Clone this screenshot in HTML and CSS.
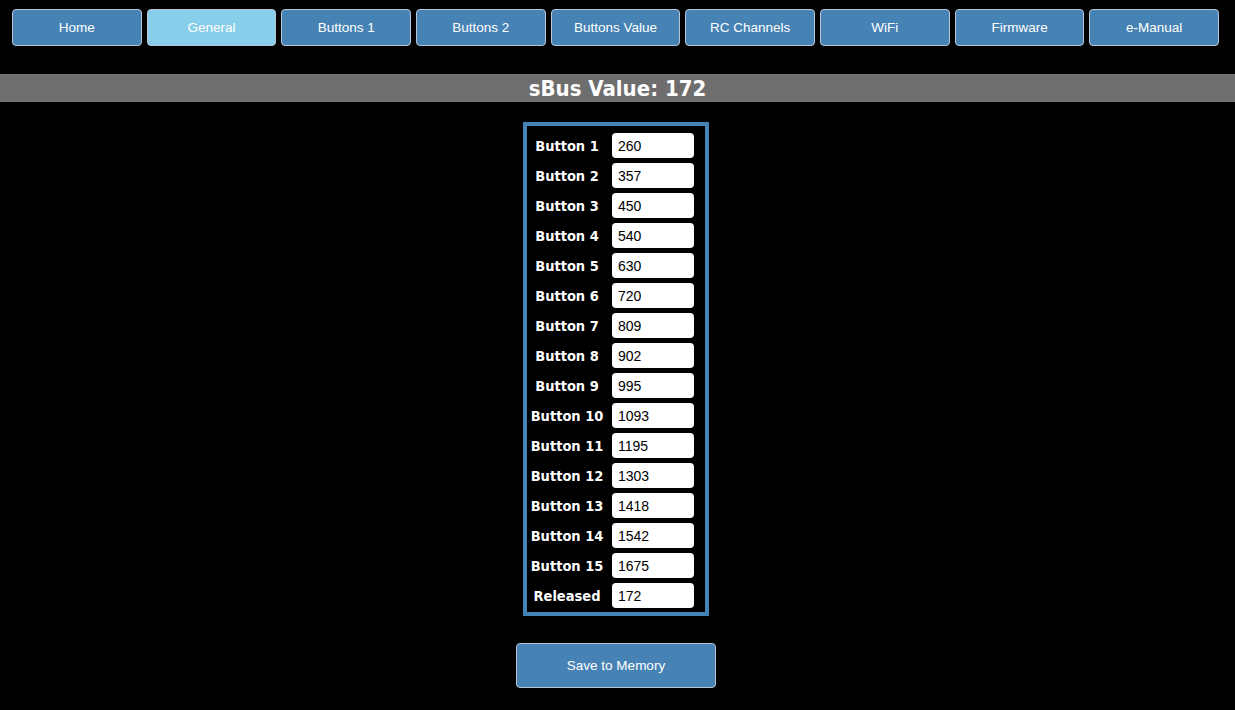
FILE: index.html
```html
<!DOCTYPE html>
<html>
<head>
<meta charset="utf-8">
<link rel="stylesheet" href="styles.css">
</head>
<body>
<nav class="nav">
  <button class="nav-btn">Home</button>
  <button class="nav-btn active">General</button>
  <button class="nav-btn">Buttons 1</button>
  <button class="nav-btn">Buttons 2</button>
  <button class="nav-btn">Buttons Value</button>
  <button class="nav-btn">RC Channels</button>
  <button class="nav-btn">WiFi</button>
  <button class="nav-btn">Firmware</button>
  <button class="nav-btn">e-Manual</button>
</nav>
<h1 class="title">sBus Value: 172</h1>
<main class="content">
  <div class="box">
    <label class="lbl">Button 1</label><input class="val" value="260">
    <label class="lbl">Button 2</label><input class="val" value="357">
    <label class="lbl">Button 3</label><input class="val" value="450">
    <label class="lbl">Button 4</label><input class="val" value="540">
    <label class="lbl">Button 5</label><input class="val" value="630">
    <label class="lbl">Button 6</label><input class="val" value="720">
    <label class="lbl">Button 7</label><input class="val" value="809">
    <label class="lbl">Button 8</label><input class="val" value="902">
    <label class="lbl">Button 9</label><input class="val" value="995">
    <label class="lbl">Button 10</label><input class="val" value="1093">
    <label class="lbl">Button 11</label><input class="val" value="1195">
    <label class="lbl">Button 12</label><input class="val" value="1303">
    <label class="lbl">Button 13</label><input class="val" value="1418">
    <label class="lbl">Button 14</label><input class="val" value="1542">
    <label class="lbl">Button 15</label><input class="val" value="1675">
    <label class="lbl">Released</label><input class="val" value="172">
  </div>
  <button class="save">Save to Memory</button>
</main>
</body>
</html>
```
FILE: styles.css
```css
html, body {
  margin: 0;
  padding: 0;
  background: #000;
  height: 100%;
}
body {
  font-family: "Liberation Sans", Arial, sans-serif;
  color: #fff;
}
.nav {
  display: flex;
  gap: 5px;
  padding: 9px 16px 0 12px;
}
.nav-btn {
  flex: 1 1 0;
  height: 37px;
  box-sizing: border-box;
  background: #4682b4;
  color: #fff;
  border: 1px solid #b8c8d8;
  border-radius: 4px;
  font-family: "Liberation Sans", Arial, sans-serif;
  font-size: 13.5px;
  padding: 0;
}
.nav-btn.active {
  background: #87ceeb;
}
.title {
  margin: 28px 0 0 0;
  height: 28px;
  background: #6e6e6e;
  font-family: "DejaVu Sans Condensed", "DejaVu Sans", sans-serif;
  font-stretch: condensed;
  font-weight: bold;
  font-size: 22px;
  line-height: 29px;
  text-align: center;
  color: #fff;
}
.content {
  display: flex;
  flex-direction: column;
  align-items: center;
  padding: 20px 3px 0 0;
}
.box {
  display: grid;
  grid-template-columns: 80px 82px;
  column-gap: 5px;
  row-gap: 5px;
  padding: 7px 11px 4px 0;
  border: 4px solid #4682b4;
  align-items: center;
}
.lbl {
  font-family: "DejaVu Sans Condensed", "DejaVu Sans", sans-serif;
  font-stretch: condensed;
  font-weight: bold;
  font-size: 14.5px;
  text-align: center;
  white-space: nowrap;
}
.val {
  width: 82px;
  height: 25px;
  box-sizing: border-box;
  border: none;
  border-radius: 4px;
  padding: 0 5px 0 6px;
  font-family: "Liberation Sans", Arial, sans-serif;
  font-size: 14px;
  color: #000;
  background: #fff;
}
.save {
  margin-top: 27px;
  width: 200px;
  height: 45px;
  background: #4682b4;
  color: #fff;
  border: 1px solid #b8c8d8;
  border-radius: 4px;
  font-family: "Liberation Sans", Arial, sans-serif;
  font-size: 13.5px;
}
```
